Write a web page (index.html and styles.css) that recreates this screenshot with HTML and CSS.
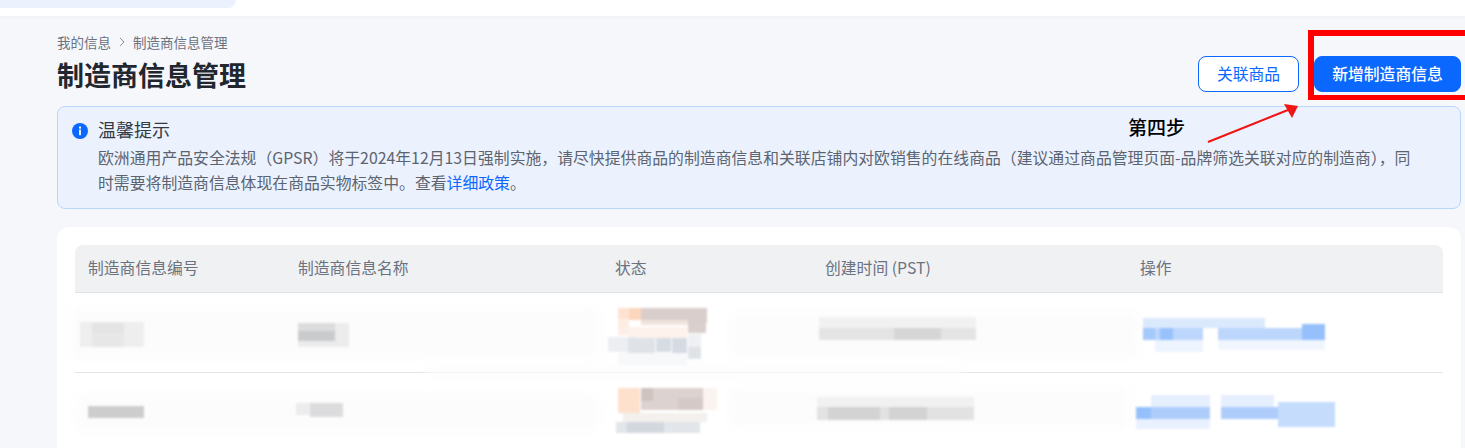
FILE: index.html
```html
<!DOCTYPE html>
<html>
    <head>
        <title>制造商信息管理</title>
        <link rel="stylesheet" href="styles.css">
    </head>
    <body>
        <div class="topbar"><div class="topbar-tab"></div></div>
        <div class="main">
            <div class="page-head">
                <div class="page-head-left">
                    <div class="breadcrumb">
                        <span>我的信息</span>
                        <svg class="crumb-arrow" width="6" height="10" viewBox="0 0 6 10"><path d="M1 1 L5 5 L1 9" fill="none" stroke="#8a9099" stroke-width="1"/></svg>
                        <span>制造商信息管理</span>
                    </div>
                    <h1 class="page-title">制造商信息管理</h1>
                </div>
                <div class="actions">
                    <button class="btn btn-outline">关联商品</button>
                    <button class="btn btn-primary">新增制造商信息</button>
                </div>
            </div>
            <div class="alert">
                <svg class="alert-icon" width="16" height="16" viewBox="0 0 16 16">
                    <circle cx="8" cy="8" r="8" fill="#0b68ff"/>
                    <rect x="7" y="3.6" width="2" height="2" fill="#fff"/>
                    <rect x="7.1" y="6.6" width="1.8" height="5.6" fill="#fff"/>
                </svg>
                <div>
                    <div class="alert-title">温馨提示</div>
                    <div class="alert-body">欧洲通用产品安全法规（GPSR）将于2024年12月13日强制实施，请尽快提供商品的制造商信息和关联店铺内对欧销售的在线商品（建议通过商品管理页面-品牌筛选关联对应的制造商），同<br>时需要将制造商信息体现在商品实物标签中。查看<a class="link" href="#">详细政策</a>。</div>
                </div>
            </div>
            <div class="card">
                <table class="maker-table">
                    <thead>
                        <tr>
                            <th class="col-id">制造商信息编号</th>
                            <th class="col-name">制造商信息名称</th>
                            <th class="col-status">状态</th>
                            <th class="col-time">创建时间 (PST)</th>
                            <th>操作</th>
                        </tr>
                    </thead>
                    <tbody>
                        <tr><td></td><td></td><td></td><td></td><td></td></tr>
                        <tr class="row-cut"><td></td><td></td><td></td><td></td><td></td></tr>
                    </tbody>
                </table>
            </div>
        </div>

        <!-- redacted cell contents, painted over the table -->
        <svg class="mosaic" width="1465" height="448" viewBox="0 0 1465 448">
            <g class="smear" fill="#fcfcfc">
                <rect x="70" y="308" width="530" height="50"/>
                <rect x="426" y="366" width="535" height="10"/>
                <rect x="75" y="395" width="525" height="36"/>
                <rect x="730" y="312" width="410" height="46"/>
                <rect x="730" y="388" width="400" height="40"/>
            </g>
            <!-- row 1 -->
            <rect x="80" y="322" width="64" height="25" fill="#eeeeee"/>
            <rect x="92" y="323" width="32" height="11" fill="#e4e4e4"/>
            <rect x="92" y="335" width="32" height="12" fill="#e7e7e7"/>
            <rect x="298" y="323" width="51" height="24" fill="#ececed"/>
            <rect x="298" y="323" width="37" height="8" fill="#dcdcdd"/>
            <rect x="298" y="331" width="37" height="10" fill="#cacbcd"/>
            <rect x="618" y="308" width="11" height="11" fill="#fde2d0"/>
            <rect x="629" y="308" width="12" height="12" fill="#fbd6bd"/>
            <rect x="641" y="308" width="66" height="15" fill="#d9cecb"/>
            <rect x="641" y="320" width="47" height="5" fill="#f0e3dd"/>
            <rect x="688" y="323" width="18" height="10" fill="#d9cfcc"/>
            <rect x="618" y="319" width="11" height="16" fill="#fdeee4"/>
            <rect x="628" y="327" width="59" height="11" fill="#fdf2ec"/>
            <rect x="608" y="337" width="28" height="15" fill="#eceef1"/>
            <rect x="628" y="338" width="27" height="15" fill="#dfe3e8"/>
            <rect x="656" y="338" width="15" height="14" fill="#d6dce3"/>
            <rect x="672" y="338" width="15" height="15" fill="#d5dbe3"/>
            <rect x="688" y="334" width="13" height="13" fill="#eef0f3"/>
            <rect x="688" y="347" width="13" height="12" fill="#dfe3e8"/>
            <rect x="618" y="353" width="69" height="12" fill="#f6f8fa"/>
            <rect x="819" y="317" width="157" height="11" fill="#f1f1f1"/>
            <rect x="819" y="328" width="157" height="12" fill="#e4e4e4"/>
            <rect x="894" y="328" width="47" height="12" fill="#d6d6d6"/>
            <rect x="1143" y="318" width="122" height="10" fill="#dbe9fd"/>
            <rect x="1143" y="328" width="60" height="12" fill="#bcd6fc"/>
            <rect x="1218" y="328" width="107" height="12" fill="#bcd6fc"/>
            <rect x="1143" y="328" width="12" height="12" fill="#a4c9fb"/>
            <rect x="1160" y="328" width="13" height="12" fill="#98c2fb"/>
            <rect x="1302" y="324" width="23" height="16" fill="#95c0fb"/>
            <rect x="1155" y="340" width="48" height="12" fill="#eef4fe"/>
            <rect x="1218" y="340" width="107" height="10" fill="#f1f6fe"/>
            <!-- row 2 -->
            <rect x="88" y="406" width="56" height="12" fill="#cdcdcd"/>
            <rect x="310" y="403" width="33" height="14" fill="#dcdcde"/>
            <rect x="296" y="403" width="14" height="12" fill="#ececed"/>
            <rect x="618" y="388" width="22" height="25" fill="#fde1cd"/>
            <rect x="641" y="388" width="62" height="22" fill="#dcd2cf"/>
            <rect x="641" y="388" width="12" height="13" fill="#cfc3c0"/>
            <rect x="678" y="398" width="25" height="12" fill="#d5c9c7"/>
            <rect x="703" y="388" width="14" height="22" fill="#fbf3ef"/>
            <rect x="623" y="413" width="84" height="9" fill="#f3f0ee"/>
            <rect x="616" y="422" width="84" height="11" fill="#e2e5e9"/>
            <rect x="627" y="422" width="37" height="11" fill="#d3d8df"/>
            <rect x="817" y="397" width="157" height="10" fill="#f1f1f1"/>
            <rect x="817" y="407" width="157" height="13" fill="#e2e2e2"/>
            <rect x="828" y="407" width="52" height="13" fill="#d3d3d3"/>
            <rect x="889" y="407" width="38" height="13" fill="#d3d3d3"/>
            <rect x="1151" y="395" width="59" height="12" fill="#e6effd"/>
            <rect x="1221" y="395" width="53" height="12" fill="#e6effd"/>
            <rect x="1136" y="407" width="74" height="12" fill="#aecdfb"/>
            <rect x="1221" y="407" width="57" height="12" fill="#aecdfb"/>
            <rect x="1136" y="407" width="15" height="12" fill="#95c0fb"/>
            <rect x="1278" y="402" width="57" height="25" fill="#c5dcfc"/>
            <rect x="1136" y="419" width="74" height="10" fill="#e9f1fe"/>
        </svg>

        <!-- annotation drawn on top of the screenshot -->
        <div class="callout-frame"></div>
        <div class="callout-label">第四步</div>
        <svg class="callout-arrow" width="1465" height="448" viewBox="0 0 1465 448">
            <line x1="1208" y1="142" x2="1288" y2="110" stroke="#f01414" stroke-width="2"/>
            <polygon points="1298,106 1284,104 1292,118" fill="#f01414"/>
        </svg>
    </body>
</html>
```

FILE: styles.css
```css
html, body {
    margin: 0;
    height: 448px;
    overflow: hidden;
}
body {
    position: relative;
    background-color: #f6f7fa;
    font-family: "Noto Sans CJK SC", "Noto Sans", sans-serif;
    color: #5c6470;
}
.topbar {
    height: 16px;
    background-color: #fff;
    box-shadow: 0 1px 4px rgba(0, 0, 0, 0.04);
}
.topbar-tab {
    width: 236px;
    height: 8px;
    background-color: #ebf1fd;
    border-bottom-right-radius: 8px;
}
.main {
    padding: 16px 4px 0 57px;
}
.page-head {
    display: flex;
    justify-content: space-between;
    align-items: flex-end;
    height: 60px;
    margin-bottom: 14px;
}
.page-head-left {
    align-self: flex-start;
}
.breadcrumb {
    display: flex;
    align-items: center;
    gap: 8px;
    font-size: 13.5px;
    line-height: 20px;
    color: #6b7280;
}
.page-title {
    margin: 5px 0 0;
    font-size: 27px;
    line-height: 36px;
    font-weight: 700;
    color: #22262e;
}
.actions {
    display: flex;
    gap: 15px;
}
.btn {
    height: 36px;
    padding: 0;
    border-radius: 8px;
    font-family: inherit;
    font-size: 15.8px;
    line-height: 34px;
}
.btn-outline {
    width: 101px;
    background-color: #fff;
    border: 1px solid #0b68ff;
    color: #0b68ff;
}
.btn-primary {
    width: 147px;
    background-color: #0b68ff;
    border: 1px solid #0b68ff;
    color: #fff;
    font-weight: 500;
}
.alert {
    display: flex;
    gap: 10px;
    box-sizing: border-box;
    height: 103px;
    padding: 10px 14px;
    background-color: #ebf2fe;
    border: 1px solid #b8d7fd;
    border-radius: 8px;
}
.alert-icon {
    flex: none;
    margin-top: 6px;
}
.alert-title {
    font-size: 18px;
    line-height: 24px;
    color: #333a45;
}
.alert-body {
    margin-top: 4px;
    font-size: 15.85px;
    line-height: 25px;
    white-space: nowrap;
}
.link {
    color: #0b68ff;
    text-decoration: none;
}
.card {
    box-sizing: border-box;
    height: 221px;
    margin-top: 18px;
    padding: 18px 18px 0;
    background-color: #fff;
    border-radius: 12px 12px 0 0;
    overflow: hidden;
}
.maker-table {
    width: 100%;
    border-collapse: separate;
    border-spacing: 0;
    table-layout: fixed;
}
.maker-table th {
    height: 45px;
    padding: 0 13px 2px;
    background-color: #f0f1f3;
    border-bottom: 1px solid #e0e2e6;
    font-size: 15.8px;
    font-weight: 400;
    text-align: left;
    color: #6b7280;
}
.maker-table th:first-child {
    border-top-left-radius: 8px;
}
.maker-table th:last-child {
    border-top-right-radius: 8px;
}
.maker-table td {
    height: 77px;
    border-bottom: 1px solid #e3e5e9;
}
.maker-table .row-cut td {
    height: 75px;
    border-bottom: none;
}
.col-id {
    width: 184px;
}
.col-name {
    width: 291px;
}
.col-status {
    width: 184px;
}
.col-time {
    width: 289px;
}
.mosaic {
    position: absolute;
    top: 0;
    left: 0;
    filter: blur(1px);
}
.smear {
    filter: blur(5px);
}
.callout-arrow {
    position: absolute;
    top: 0;
    left: 0;
}
.callout-frame {
    position: absolute;
    left: 1308px;
    top: 30px;
    width: 153px;
    height: 59px;
    border: solid #ff0000;
    border-width: 6px 4px 5px 6px;
}
.callout-label {
    position: absolute;
    left: 1128px;
    top: 115px;
    font-family: "Liberation Serif", "Noto Sans CJK SC", serif;
    font-size: 19px;
    line-height: 28px;
    font-weight: 500;
    color: #000;
}
```
